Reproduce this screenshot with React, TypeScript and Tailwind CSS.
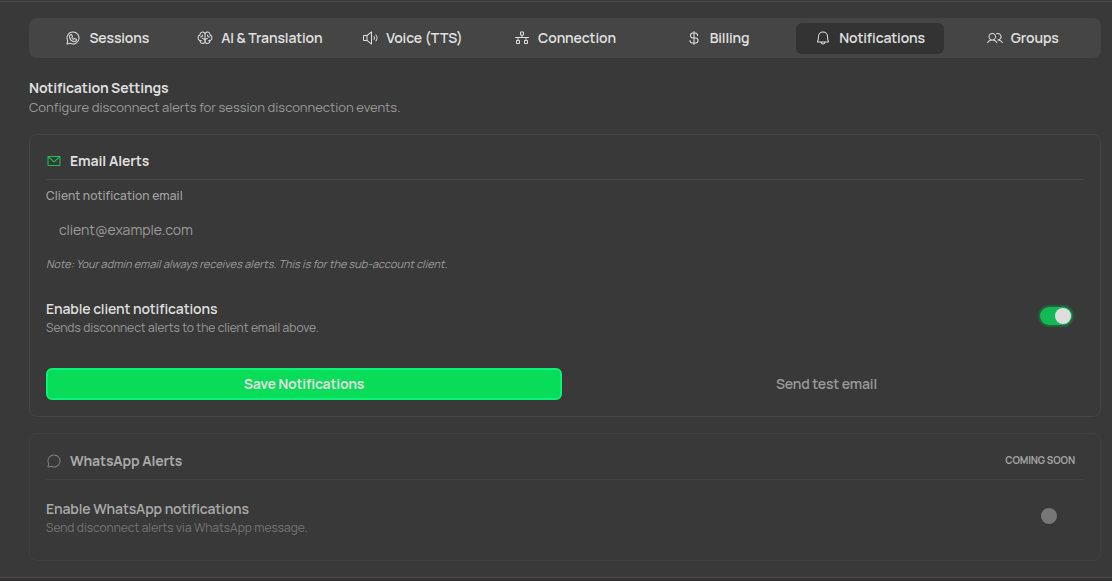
import { useState } from "react";
import type { IconType } from "react-icons";
import {
  PiBell,
  PiBrain,
  PiChatCircle,
  PiCurrencyDollar,
  PiEnvelopeSimple,
  PiNetwork,
  PiSpeakerHigh,
  PiUsers,
  PiWhatsappLogo,
} from "react-icons/pi";

interface Tab {
  id: string;
  label: string;
  icon: IconType;
}

const tabs: Tab[] = [
  { id: "sessions", label: "Sessions", icon: PiWhatsappLogo },
  { id: "ai", label: "AI & Translation", icon: PiBrain },
  { id: "voice", label: "Voice (TTS)", icon: PiSpeakerHigh },
  { id: "connection", label: "Connection", icon: PiNetwork },
  { id: "billing", label: "Billing", icon: PiCurrencyDollar },
  { id: "notifications", label: "Notifications", icon: PiBell },
  { id: "groups", label: "Groups", icon: PiUsers },
];

export default function App() {
  const [activeTab, setActiveTab] = useState("notifications");
  const [email, setEmail] = useState("");
  const [enabled, setEnabled] = useState(true);

  return (
    <div className="flex h-[581px] w-full flex-col overflow-hidden bg-[#393939] font-['Manrope','Inter',sans-serif] text-[#dedede]">
      <div className="h-0.5 shrink-0 border-b border-[#484848]" />
      <main className="h-[575px] shrink-0 pl-[29px] pr-[11px] pt-4">
        <nav className="grid h-10 grid-cols-7 gap-1 rounded-lg bg-[#454545] px-1 pb-1 pt-[5px]">
          {tabs.map(({ id, label, icon: Icon }) => (
            <button
              key={id}
              onClick={() => setActiveTab(id)}
              className={`flex items-center justify-center gap-2 rounded-md pb-px text-sm font-semibold text-[#e0e0e0] ${activeTab === id ? "bg-[#333333]" : ""}`}
            >
              <Icon className="size-4 shrink-0" />
              <span className="whitespace-nowrap tracking-[-0.12px]">{label}</span>
            </button>
          ))}
        </nav>

        <header className="mt-5">
          <h2 className="text-sm font-bold leading-5 tracking-[-0.17px]">
            Notification Settings
          </h2>
          <p className="text-[13px] font-normal leading-[18px] text-[#9a9a9a]">
            Configure disconnect alerts for session disconnection events.
          </p>
        </header>

        <section className="mt-[18px] h-[283px] rounded-lg border border-[#444444] px-4 pt-4">
          <div className="flex h-[29px] items-start gap-2 border-b border-[#454545]">
            <PiEnvelopeSimple className="mt-0.5 size-4 text-[#12c956]" />
            <h3 className="text-sm font-bold leading-5 tracking-[-0.1px]">Email Alerts</h3>
          </div>
          <label
            htmlFor="clientEmail"
            className="mt-[7px] block text-xs font-medium leading-[18px] tracking-[0.1px] text-[#a3a3a3]"
          >
            Client notification email
          </label>
          <input
            id="clientEmail"
            type="email"
            value={email}
            onChange={(e) => setEmail(e.target.value)}
            placeholder="client@example.com"
            className="mt-1.5 block h-9 w-full bg-transparent px-[13px] text-sm font-normal outline-none placeholder:text-[#9a9a9a]"
          />
          <p className="mt-[9px] text-[11px] font-normal italic leading-4 text-[#9d9d9d]">
            Note: Your admin email always receives alerts. This is for the sub-account client.
          </p>

          <div className="mt-[27px] flex items-center justify-between pr-3">
            <div>
              <h4 className="text-sm font-semibold leading-5 tracking-[-0.12px]">
                Enable client notifications
              </h4>
              <p className="text-xs font-normal leading-[18px] text-[#9a9a9a]">
                Sends disconnect alerts to the client email above.
              </p>
            </div>
            <button
              role="switch"
              aria-checked={enabled}
              onClick={() => setEnabled(!enabled)}
              className={`mb-1 flex h-[18px] w-8 items-center rounded-full px-px ${enabled ? "justify-end bg-[#13b955] ring-2 ring-[#275f3a]" : "justify-start"}`}
            >
              <span className="size-4 rounded-full bg-[#dedede]" />
            </button>
          </div>

          <div className="mt-[31px] grid grid-cols-2 gap-1.5">
            <button className="h-8 rounded-md border-2 border-[#05f578] bg-[#08dc59] text-sm font-bold tracking-[-0.25px]">
              Save Notifications
            </button>
            <button className="h-8 pl-px text-sm font-semibold tracking-[-0.13px] text-[#9a9a9a]">
              Send test email
            </button>
          </div>
        </section>

        <section className="mt-4 h-[128px] rounded-lg border border-[#404040] px-4 pt-[17px]">
          <div className="flex h-[29px] items-start gap-2 border-b border-[#414141]">
            <PiChatCircle className="mt-0.5 size-4 text-[#808080]" />
            <h3 className="text-sm font-bold leading-5 tracking-[-0.15px] text-[#aaaaaa]">
              WhatsApp Alerts
            </h3>
            <span className="ml-auto mr-[9px] text-[10px] font-bold leading-[19px] tracking-[-0.15px] text-[#a3a3a3]">
              COMING SOON
            </span>
          </div>
          <div className="mt-[19px] flex items-center justify-between pr-[27px]">
            <div>
              <h4 className="text-sm font-semibold leading-5 tracking-[-0.12px] text-[#aaaaaa]">
                Enable WhatsApp notifications
              </h4>
              <p className="text-xs font-normal leading-[18px] text-[#747474]">
                Send disconnect alerts via WhatsApp message.
              </p>
            </div>
            <span className="mb-1 size-4 rounded-full bg-[#777777]" />
          </div>
        </section>
      </main>
      <div className="flex-1 border-t border-[#4a4a4a] bg-[#343232]" />
    </div>
  );
}
